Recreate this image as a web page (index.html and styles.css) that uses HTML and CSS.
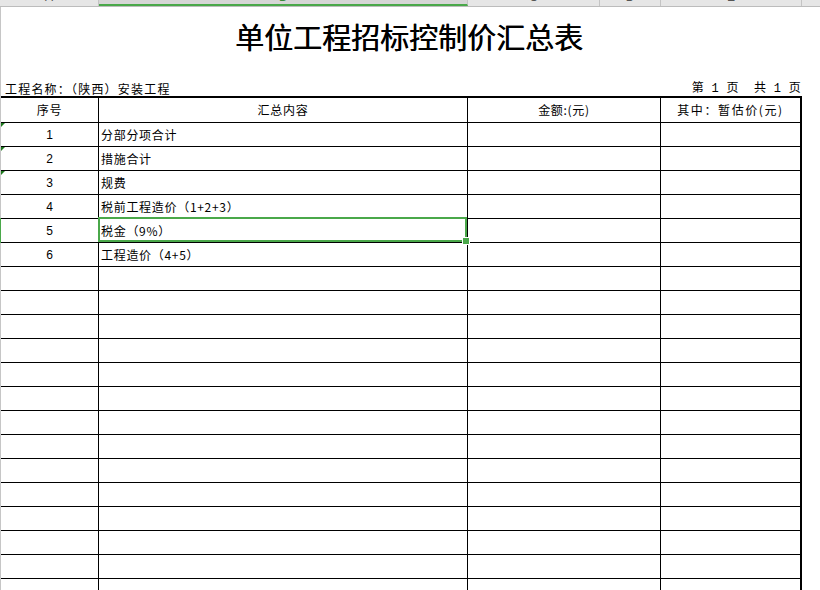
FILE: index.html
```html
<!DOCTYPE html>
<html lang="zh-CN">
<head>
<meta charset="utf-8">
<title>单位工程招标控制价汇总表</title>
<link rel="stylesheet" href="styles.css">
</head>
<body>
<div class="colhdr">
  <div class="ch"><span>A</span></div>
  <div class="ch active"><span>B</span></div>
  <div class="ch"><span>C</span></div>
  <div class="ch"><span>D</span></div>
  <div class="ch"><span>E</span></div>
  <div class="ch last"></div>
</div>
<div class="sheet">
  <div class="title">单位工程招标控制价汇总表</div>
  <div class="info"><span class="name">工程名称：（陕西）安装工程</span><span class="page">第 1 页  共 1 页</span></div>
  <div class="grid">
    <div class="c hd">序号</div><div class="c hd">汇总内容</div><div class="c hd">金额:(元)</div><div class="c hd last">其中：暂估价(元)</div>

    <div class="c num err">1</div><div class="c txt">分部分项合计</div><div class="c"></div><div class="c last"></div>
    <div class="c num err">2</div><div class="c txt">措施合计</div><div class="c"></div><div class="c last"></div>
    <div class="c num err">3</div><div class="c txt">规费</div><div class="c"></div><div class="c last"></div>
    <div class="c num">4</div><div class="c txt">税前工程造价（1+2+3）</div><div class="c"></div><div class="c last"></div>
    <div class="c num rowsel">5</div><div class="c txt sel">税金（9%）</div><div class="c"></div><div class="c last"></div>
    <div class="c num">6</div><div class="c txt">工程造价（4+5）</div><div class="c"></div><div class="c last"></div>

    <div class="c"></div><div class="c"></div><div class="c"></div><div class="c last"></div>
    <div class="c"></div><div class="c"></div><div class="c"></div><div class="c last"></div>
    <div class="c"></div><div class="c"></div><div class="c"></div><div class="c last"></div>
    <div class="c"></div><div class="c"></div><div class="c"></div><div class="c last"></div>
    <div class="c"></div><div class="c"></div><div class="c"></div><div class="c last"></div>
    <div class="c"></div><div class="c"></div><div class="c"></div><div class="c last"></div>
    <div class="c"></div><div class="c"></div><div class="c"></div><div class="c last"></div>
    <div class="c"></div><div class="c"></div><div class="c"></div><div class="c last"></div>
    <div class="c"></div><div class="c"></div><div class="c"></div><div class="c last"></div>
    <div class="c"></div><div class="c"></div><div class="c"></div><div class="c last"></div>
    <div class="c"></div><div class="c"></div><div class="c"></div><div class="c last"></div>
    <div class="c"></div><div class="c"></div><div class="c"></div><div class="c last"></div>
    <div class="c"></div><div class="c"></div><div class="c"></div><div class="c last"></div>
    <div class="c"></div><div class="c"></div><div class="c"></div><div class="c last"></div>
  </div>
</div>
</body>
</html>
```
FILE: styles.css
```css
* { box-sizing: border-box; }
html, body {
  margin: 0;
  padding: 0;
  width: 820px;
  height: 590px;
  overflow: hidden;
  background: #fff;
  font-family: "Liberation Sans", "Noto Sans CJK SC", sans-serif;
  color: #000;
}
.colhdr {
  display: grid;
  grid-template-columns: 99px 369px 132px 61px 141px 18px;
  height: 7px;
  background: #e6e6e6;
  border-bottom: 1px solid #bcbcbc;
  overflow: hidden;
}
.ch {
  border-right: 1px solid #c4c4c4;
  text-align: center;
  font-size: 12px;
  line-height: 12px;
  color: #555;
  overflow: hidden;
  position: relative;
}
.ch span { display: block; margin-top: -9px; }
.ch.active {
  background: #d6d6d6;
  color: #3a8a3a;
  border-bottom: 2px solid #4aa84a;
}
.ch.last { border-right: none; }
.sheet {
  border-left: 1px solid #c6c6c6;
  height: 583px;
}
.title {
  height: 73px;
  padding-top: 11px;
  padding-right: 3px;
  text-align: center;
  font-size: 29px;
  line-height: 36px;
  font-weight: 400;
  text-shadow: 0.5px 0 0 #000;
  font-family: "Noto Sans CJK SC", sans-serif;
}
.info {
  display: flex;
  justify-content: space-between;
  align-items: flex-end;
  height: 16px;
  width: 801px;
  padding: 0 1px 0 4px;
  font-size: 12px;
  line-height: 14px;
  font-family: "Noto Sans CJK SC", sans-serif;
}
.name { letter-spacing: 1.2px; }
.page {
  white-space: pre;
  font-family: "Liberation Mono", "Noto Sans CJK SC", monospace;
  letter-spacing: 0.3px;
}
.grid {
  display: grid;
  grid-template-columns: 98px 369px 193px 141px;
  grid-template-rows: 25px;
  grid-auto-rows: 24px;
  width: 801px;
  border-top: 2px solid #000;
  font-size: 12px;
}
.c {
  border-right: 1px solid #000;
  border-bottom: 1px solid #000;
  display: flex;
  align-items: center;
  font-family: "Noto Sans CJK SC", sans-serif;
  line-height: 14px;
  letter-spacing: 0.7px;
  position: relative;
}
.c.last { border-right: 2px solid #000; }
.hd { justify-content: center; }
.hd.last { letter-spacing: 1.6px; }
.num { justify-content: center; font-family: "Liberation Sans", sans-serif; letter-spacing: 0; }
.txt { padding-left: 2px; }
.err::after {
  content: "";
  position: absolute;
  top: 0;
  left: 0;
  border-top: 4px solid #1f7a1f;
  border-right: 4px solid transparent;
}
.rowsel::before {
  content: "";
  position: absolute;
  left: -1px;
  top: -1px;
  width: 1px;
  height: 25px;
  background: #4aa84a;
}
.sel::after {
  content: "";
  position: absolute;
  top: -2px;
  left: -1px;
  right: 0;
  bottom: 0;
  border: 2px solid #4aa84a;
}
.sel::before {
  content: "";
  position: absolute;
  right: -3px;
  bottom: -3px;
  width: 6px;
  height: 6px;
  background: #4aa84a;
  border: 1px solid #fff;
  z-index: 2;
}
```
